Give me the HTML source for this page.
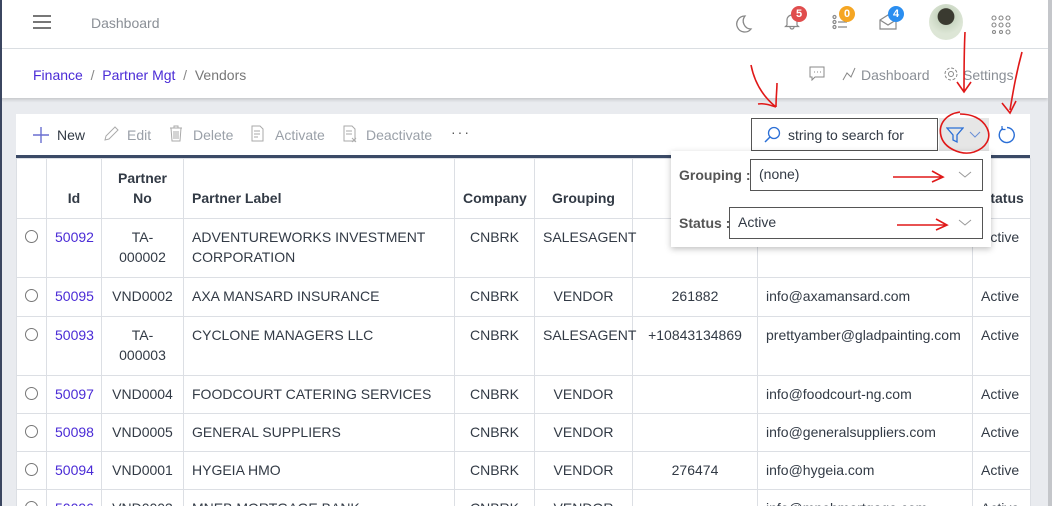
<!DOCTYPE html>
<html><head><meta charset="utf-8"><style>
*{box-sizing:border-box;margin:0;padding:0}
html{width:1052px;height:506px;overflow:hidden}
body{width:1052px;height:506px;overflow:hidden;background:#e9ebef;font-family:"Liberation Sans",sans-serif;font-size:14px;color:#323a45;position:relative}
.abs{position:absolute}
#hdr{left:0;top:0;width:1052px;height:49px;background:#fff;border-bottom:1px solid #dcdfe4}
#bc{left:0;top:49px;width:1048px;height:49px;background:#fff;box-shadow:0 2px 3px rgba(0,0,0,.15)}
#lline{left:0;top:0;width:2px;height:506px;background:#3b4660;z-index:5}
#sb{left:1048px;top:0;width:4px;height:506px;background:#c4c6ca}
#card{left:16px;top:114px;width:1014px;height:400px;background:#fff}
#bar{left:16px;top:155px;width:1014px;height:3px;background:#3b4a66}
table{position:absolute;left:16px;top:158px;border-collapse:collapse;table-layout:fixed;width:1014px;background:#fff}
td,th{border:1px solid #dcdfe4;vertical-align:top;padding:8px 8px 8px;line-height:20px;font-size:14px}
th{vertical-align:bottom;font-weight:bold;color:#323a45;padding-bottom:10px}
td.c,th.c{text-align:center}
a{color:#4a2bd6;text-decoration:none}
.rad{display:inline-block;width:13px;height:13px;border:1px solid #777;border-radius:50%;margin-top:3px}
.tb{top:127px;font-size:14px;color:#9aa0a8}
.badge{position:absolute;height:16px;border-radius:8px;color:#fff;font-size:11px;font-weight:bold;text-align:center;line-height:16px;padding:0 5px}
.sel{position:absolute;border:1px solid #555;background:#fff;height:32px;padding:6px 8px;font-size:14px}
</style></head><body>
<div id="hdr" class="abs"></div>
<div id="bc" class="abs"></div>
<div id="lline" class="abs"></div>
<div id="sb" class="abs"></div>
<div class="abs" style="left:33px;top:15px;width:18px;height:2px;background:#777;box-shadow:0 6px 0 #777,0 12px 0 #777"></div>
<div class="abs" style="left:91px;top:15px;color:#8a8f96">Dashboard</div>
<svg class="abs" style="left:733px;top:13px" width="20" height="22" viewBox="0 0 20 22"><path d="M12 3a8 8 0 1 0 6 13A8 8 0 0 1 12 3z" fill="none" stroke="#888" stroke-width="1.3"/></svg>
<svg class="abs" style="left:783px;top:12px" width="18" height="18" viewBox="0 0 18 18"><path d="M4 13V8a5 5 0 0 1 10 0v5l1.5 1.5h-13zM7 15a2 2 0 0 0 4 0" fill="none" stroke="#888" stroke-width="1.2"/></svg>
<div class="badge" style="left:791px;top:6px;background:#e04d4d">5</div>
<svg class="abs" style="left:832px;top:14px" width="16" height="16"><g fill="none" stroke="#888" stroke-width="1.2"><circle cx="2.5" cy="3" r="1.5"/><circle cx="2.5" cy="8" r="1.5"/><circle cx="2.5" cy="13" r="1.5"/><path d="M6 8h9M6 13h9"/></g></svg>
<div class="badge" style="left:839px;top:6px;background:#f5a623">0</div>
<svg class="abs" style="left:879px;top:14px" width="18" height="16"><path d="M1 6l8-5 8 5v9H1zM1 6l8 5 8-5" fill="none" stroke="#888" stroke-width="1.2"/></svg>
<div class="badge" style="left:888px;top:6px;background:#2b8ef0">4</div>
<div class="abs" style="left:929px;top:4px;width:34px;height:36px;border-radius:50%;background:radial-gradient(circle at 50% 35%,#3a3a30 0 28%,#c9d6c2 30%,#dde6d6 60%);"></div>
<svg class="abs" style="left:991px;top:15px" width="20" height="20"><g fill="none" stroke="#888" stroke-width="1.1"><circle cx="3" cy="3" r="2"/><circle cx="10" cy="3" r="2"/><circle cx="17" cy="3" r="2"/><circle cx="3" cy="10" r="2"/><circle cx="10" cy="10" r="2"/><circle cx="17" cy="10" r="2"/><circle cx="3" cy="17" r="1.5"/><circle cx="10" cy="17" r="1.5"/><circle cx="17" cy="17" r="2"/></g></svg>
<div class="abs" style="left:33px;top:67px"><a>Finance</a> <span style="color:#888">&nbsp;/&nbsp;</span> <a>Partner Mgt</a> <span style="color:#888">&nbsp;/&nbsp;</span> <span style="color:#777">Vendors</span></div>
<svg class="abs" style="left:809px;top:66px" width="16" height="15"><path d="M1 1h14v10H6l-3 3v-3H1z" fill="none" stroke="#888"/><path d="M5 6h1M8 6h1M11 6h1" stroke="#888"/></svg>
<svg class="abs" style="left:841px;top:66px" width="16" height="16"><path d="M2 14l4-7 4 4 4-9" fill="none" stroke="#888"/></svg>
<div class="abs" style="left:861px;top:67px;color:#8a8f96">Dashboard</div>
<svg class="abs" style="left:943px;top:66px" width="16" height="16"><circle cx="8" cy="8" r="2.5" fill="none" stroke="#888"/><circle cx="8" cy="8" r="6" fill="none" stroke="#888" stroke-dasharray="3 1.7"/></svg>
<div class="abs" style="left:963px;top:67px;color:#8a8f96">Settings</div>
<div id="card" class="abs"></div>
<div id="bar" class="abs"></div>
<svg class="abs" style="left:32px;top:126px" width="18" height="18"><path d="M9 1v16M1 9h16" stroke="#6a6fd0" stroke-width="1.4"/></svg>
<div class="abs tb" style="left:57px;color:#323a45">New</div>
<svg class="abs" style="left:103px;top:126px" width="16" height="16"><path d="M2 14l1-4 9-9 3 3-9 9z" fill="none" stroke="#aaa"/></svg>
<div class="abs tb" style="left:127px">Edit</div>
<svg class="abs" style="left:169px;top:125px" width="14" height="17"><path d="M1 3h12M5 3V1h4v2M2 3l1 13h8l1-13M5 6v8M7 6v8M9 6v8" fill="none" stroke="#aaa"/></svg>
<div class="abs tb" style="left:193px">Delete</div>
<svg class="abs" style="left:250px;top:125px" width="16" height="18"><path d="M2 1h8l3 3v12H2zM4 6h6M4 9h6M4 12h4" fill="none" stroke="#aaa"/></svg>
<div class="abs tb" style="left:275px">Activate</div>
<svg class="abs" style="left:342px;top:125px" width="16" height="18"><path d="M2 1h8l3 3v12H2zM4 6h6M4 9h6M10 13l4 4M14 13l-4 4" fill="none" stroke="#aaa"/></svg>
<div class="abs tb" style="left:366px">Deactivate</div>
<div class="abs" style="left:451px;top:124px;color:#555;letter-spacing:2px">···</div>
<div class="abs" style="left:751px;top:118px;width:187px;height:33px;border:1px solid #555;background:#fff"></div>
<svg class="abs" style="left:763px;top:126px" width="18" height="18"><circle cx="11" cy="7" r="5.5" fill="none" stroke="#2b6fd6" stroke-width="1.3"/><path d="M7 11l-5 5" stroke="#2b6fd6" stroke-width="1.5"/></svg>
<div class="abs" style="left:788px;top:127px;color:#323a45">string to search for</div>
<div class="abs" style="left:939px;top:118px;width:50px;height:36px;background:#e6e6e6"></div>
<svg class="abs" style="left:946px;top:126px" width="18" height="18"><path d="M1 2h16l-6 7v7l-4-2V9z" fill="none" stroke="#2b6fd6" stroke-width="1.3"/></svg>
<svg class="abs" style="left:969px;top:131px" width="12" height="8"><path d="M1 1l5 5 5-5" fill="none" stroke="#6a8fd6"/></svg>
<svg class="abs" style="left:997px;top:125px" width="20" height="20"><path d="M6 3.5A7.5 7.5 0 1 0 10 2.5" fill="none" stroke="#2b6fd6" stroke-width="1.4"/><path d="M5 1v3.5h3.5" fill="none" stroke="#2b6fd6" stroke-width="1.2"/></svg>
<table>
<colgroup><col style="width:30px"><col style="width:55px"><col style="width:82px"><col style="width:271px"><col style="width:80px"><col style="width:98px"><col style="width:125px"><col style="width:215px"><col style="width:58px"></colgroup>
<tr style="height:60px"><th></th><th class="c">Id</th><th class="c">Partner<br>No</th><th style="text-align:left">Partner Label</th><th class="c">Company</th><th class="c">Grouping</th><th class="c">Tel</th><th>Email</th><th>Status</th></tr>
<tr style="height:59px"><td><span class="rad"></span></td><td><a>50092</a></td><td class="c">TA-<br>000002</td><td>ADVENTUREWORKS INVESTMENT CORPORATION</td><td class="c">CNBRK</td><td class="c">SALESAGENT</td><td class="c">+440</td><td></td><td>Active</td></tr>
<tr style="height:39px"><td><span class="rad"></span></td><td><a>50095</a></td><td class="c">VND0002</td><td>AXA MANSARD INSURANCE</td><td class="c">CNBRK</td><td class="c">VENDOR</td><td class="c">261882</td><td>info@axamansard.com</td><td>Active</td></tr>
<tr style="height:59px"><td><span class="rad"></span></td><td><a>50093</a></td><td class="c">TA-<br>000003</td><td>CYCLONE MANAGERS LLC</td><td class="c">CNBRK</td><td class="c">SALESAGENT</td><td class="c">+10843134869</td><td>prettyamber@gladpainting.com</td><td>Active</td></tr>
<tr style="height:38px"><td><span class="rad"></span></td><td><a>50097</a></td><td class="c">VND0004</td><td>FOODCOURT CATERING SERVICES</td><td class="c">CNBRK</td><td class="c">VENDOR</td><td class="c"></td><td>info@foodcourt-ng.com</td><td>Active</td></tr>
<tr style="height:38px"><td><span class="rad"></span></td><td><a>50098</a></td><td class="c">VND0005</td><td>GENERAL SUPPLIERS</td><td class="c">CNBRK</td><td class="c">VENDOR</td><td class="c"></td><td>info@generalsuppliers.com</td><td>Active</td></tr>
<tr style="height:38px"><td><span class="rad"></span></td><td><a>50094</a></td><td class="c">VND0001</td><td>HYGEIA HMO</td><td class="c">CNBRK</td><td class="c">VENDOR</td><td class="c">276474</td><td>info@hygeia.com</td><td>Active</td></tr>
<tr style="height:38px"><td><span class="rad"></span></td><td><a>50096</a></td><td class="c">VND0003</td><td>MNEB MORTGAGE BANK</td><td class="c">CNBRK</td><td class="c">VENDOR</td><td class="c"></td><td>info@mnebmortgage.com</td><td>Active</td></tr>
</table>
<div class="abs" style="left:671px;top:151px;width:320px;height:96px;background:#fff;box-shadow:0 2px 6px rgba(0,0,0,.25)"></div>
<div class="abs" style="left:679px;top:167px;font-weight:bold;color:#555">Grouping :</div>
<div class="sel" style="left:750px;top:159px;width:233px">(none)</div>
<div class="abs" style="left:679px;top:215px;font-weight:bold;color:#555">Status :</div>
<div class="sel" style="left:729px;top:207px;width:254px">Active</div>
<svg class="abs" style="left:958px;top:170px" width="14" height="10"><path d="M1 2l6 5 6-5" fill="none" stroke="#999"/></svg>
<svg class="abs" style="left:958px;top:218px" width="14" height="10"><path d="M1 2l6 5 6-5" fill="none" stroke="#999"/></svg>
<svg class="abs" style="left:0;top:0" width="1052" height="506"><g fill="none" stroke="#e01818" stroke-width="1.6">
<path d="M893 177h50M932 171l11 6-11 5"/>
<path d="M897 225h50M936 219l11 6-11 5"/>
<path d="M751 65c3 15 10 30 25 42M776 107c0-10 1-18 1-24M776 107c-6-2-12-4-18-3"/>
<path d="M965 32c-1 20-1 45-1 60M957 82l7 10 7-10"/>
<path d="M1022 52c-6 22-9 40-12 58M1002 103l8 10 6-12"/>
<path d="M960 112c-14 2-22 12-19 24 3 12 20 20 33 16 12-4 18-14 13-24-5-10-16-14-27-14"/>
</g></svg>
</body></html>
